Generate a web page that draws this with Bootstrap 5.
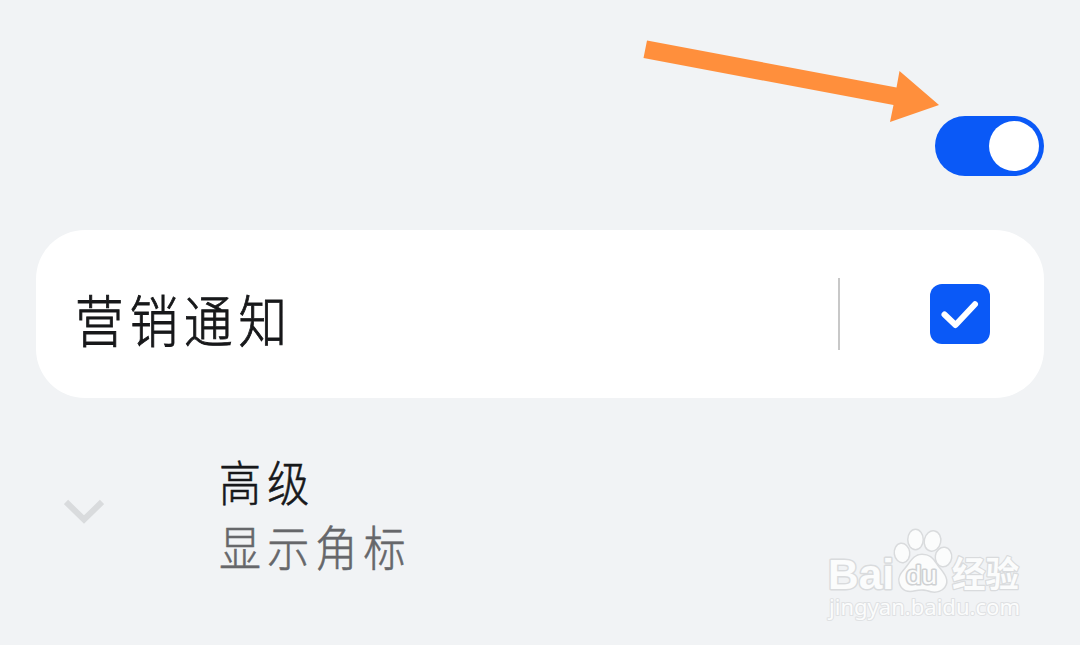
<!DOCTYPE html>
<html lang="zh-CN">
<head>
<meta charset="utf-8">
<meta name="viewport" content="width=device-width, initial-scale=1">
<title>通知</title>
<link href="https://cdn.jsdelivr.net/npm/bootstrap@5.3.0/dist/css/bootstrap.min.css" rel="stylesheet">
<style>
  body { background: #f1f3f5; font-family: "Liberation Sans", "Noto Sans CJK SC", sans-serif; }
  .screen { width: 1080px; height: 645px; padding: 116px 36px 0; }
  .toggle { width: 109px; height: 60px; padding: 5px; background: #0a59f7; }
  .knob { width: 50px; height: 50px; }
  .channel { height: 168px; margin-top: 54px; padding: 0 54px 0 40px; border-radius: 49px; background: #fff; }
  .hand { font-family: "Noto Sans CJK SC", sans-serif; font-weight: 300; white-space: nowrap; line-height: 1; transform-origin: 0 50%; -webkit-text-stroke: .9px currentColor; }
  .channel-name { font-size: 56px; letter-spacing: 7px; transform: scaleX(.865); color: #17181a; margin: 7px 0 0 -1px; }
  .rule { width: 2px; height: 72px; background: #c8c8c8; margin-right: 90px; }
  .tick { width: 60px; height: 60px; border-radius: 12px; background: #0a59f7; }
  .advanced { margin-top: 59px; padding-left: 28px; }
  .chevron { margin: 41px 115px 0 0; }
  .adv-title, .adv-sub { font-size: 48px; letter-spacing: 7px; transform: translateY(-3px) scaleX(.875); -webkit-text-stroke-width: .6px; }
  .adv-title { color: #17181a; height: 65px; padding-top: 2px; }
  .adv-sub { color: #66676a; height: 50px; padding-top: 2px; }
  .arrow { left: 640px; top: 36px; }
  .watermark { left: 820px; top: 520px; }
</style>
</head>
<body class="overflow-hidden">
<main class="screen position-relative">
  <div class="d-flex justify-content-end">
    <div class="toggle rounded-pill d-flex justify-content-end" role="switch" aria-checked="true"><span class="knob rounded-circle bg-white"></span></div>
  </div>

  <section class="channel d-flex align-items-center">
    <div class="hand channel-name me-auto">营销通知</div>
    <div class="rule"></div>
    <div class="tick" role="checkbox" aria-checked="true">
      <svg class="d-block" width="60" height="60" viewBox="0 0 60 60" fill="none" stroke="#fff" stroke-width="6" stroke-linecap="round" stroke-linejoin="round"><path d="M14.5 30.5 25.5 41 45 20.3"/></svg>
    </div>
  </section>

  <section class="advanced d-flex align-items-start">
    <svg class="chevron flex-shrink-0" width="40" height="28" viewBox="0 0 40 28" fill="none" stroke="#d9dbdd" stroke-width="6"><path d="M2 4 20 21.5 38 4"/></svg>
    <div>
      <div class="hand adv-title">高级</div>
      <div class="hand adv-sub">显示角标</div>
    </div>
  </section>

  <svg class="arrow position-absolute" width="302" height="90" viewBox="640 36 302 90"><path fill="#ff8f3c" d="M647 40.5 896.500 87.500 899.500 71 939 105 890 122 893.500 105 643.500 58Z"/></svg>

  <svg class="watermark position-absolute" width="210" height="110" viewBox="820 520 210 110">
    <g fill="#fbfcfc" stroke="#d9dbdd" stroke-width="3" paint-order="stroke" stroke-linejoin="round">
      <text x="828" y="589" font-size="43" font-weight="700" font-family="Liberation Sans, sans-serif" textLength="66" lengthAdjust="spacingAndGlyphs">Bai</text>
      <ellipse cx="902" cy="553" rx="7" ry="9" transform="rotate(-8 902 553)"/>
      <ellipse cx="915.500" cy="539.500" rx="7" ry="9.500"/>
      <ellipse cx="932.500" cy="541" rx="7.500" ry="9.500" transform="rotate(12 932.500 541)"/>
      <ellipse cx="943.500" cy="557" rx="7.500" ry="9" transform="rotate(8 943.500 557)"/>
      <path d="M922 555C914 555 911 562 907 567C902 573 898 577 900 583C902 590 908 592 915 590C920 589 926 589 931 591C940 593 947 587 946 580C945 574 940 570 936 564C932 558 929 555 922 555Z"/>
      <text x="906" y="584" font-size="25" font-family="Liberation Sans, sans-serif" textLength="31" lengthAdjust="spacingAndGlyphs" stroke="#cfd1d3">du</text>
      <text x="952" y="587" font-size="35" font-weight="700" font-family="Noto Sans CJK SC, sans-serif" textLength="67" lengthAdjust="spacingAndGlyphs" stroke-width="2.500">经验</text>
      <text x="829" y="615" font-size="22" stroke="#dfe1e3" stroke-width="2" font-family="Noto Sans, sans-serif" textLength="191" lengthAdjust="spacingAndGlyphs">jingyan.baidu.com</text>
    </g>
  </svg>
</main>
<script src="https://cdn.jsdelivr.net/npm/bootstrap@5.3.0/dist/js/bootstrap.bundle.min.js"></script>
</body>
</html>
